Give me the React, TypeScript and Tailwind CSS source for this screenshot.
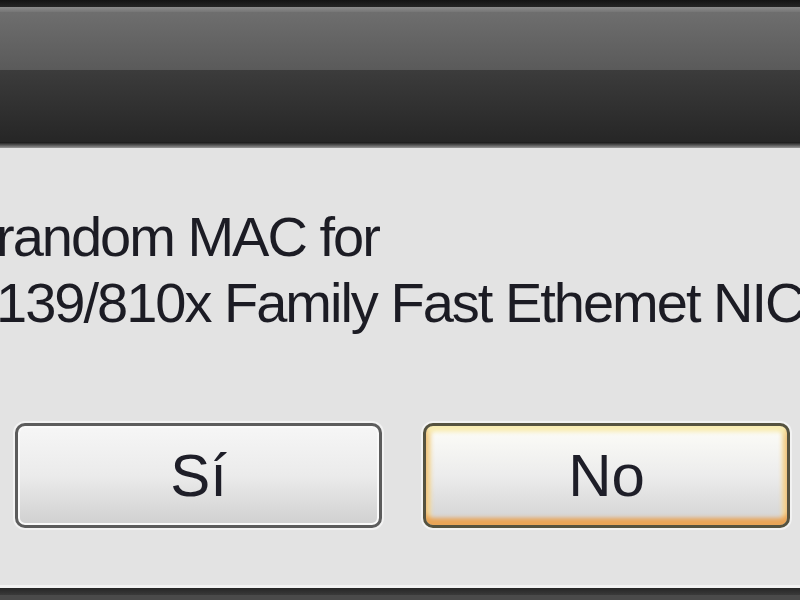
export default function App() {
  return (
    <div className="w-[800px] h-[600px] overflow-hidden flex flex-col bg-[#e3e3e3] font-['Liberation_Sans',Arial,sans-serif]">
      {/* Title bar */}
      <div className="h-[148px] flex flex-col shrink-0">
        <div className="h-[7px] bg-gradient-to-b from-[#141414] to-[#262626]" />
        <div className="h-[5px] bg-gradient-to-b from-[#8c8c8c] to-[#767676]" />
        <div className="h-[58px] bg-gradient-to-b from-[#6e6e6e] to-[#5a5a5a]" />
        <div className="h-[72px] bg-gradient-to-b from-[#3c3c3c] to-[#262626]" />
        <div className="h-[6px] bg-gradient-to-b from-[#161616] to-[#9a9a9a]" />
      </div>

      {/* Body */}
      <div className="flex-1 flex flex-col">
        <div className="pt-[56px] text-[56px] leading-[66px] tracking-[-2px] text-[#1c1c24] whitespace-nowrap">
          <div className="ml-[-4px]">random MAC for</div>
          <div className="ml-[-4px]">139/810x Family Fast Ethemet NIC</div>
        </div>

        <div className="mt-[87px] flex gap-[41px] pl-[15px]">
          <button className="w-[367px] h-[105px] rounded-[10px] border-[3px] border-[#5c5c5c] bg-gradient-to-b from-[#f6f6f6] via-[#ebebeb] to-[#d0d0d0] shadow-[inset_0_0_0_2px_#fafafa,0_0_0_2px_#f2f2f2] flex items-center justify-center text-[60px] text-[#1e1e28]">
            Sí
          </button>
          <button className="w-[367px] h-[105px] rounded-[10px] border-[3px] border-[#55523f] bg-gradient-to-b from-[#fdfdf8] via-[#ececec] to-[#d2d2d2] shadow-[inset_0_-7px_4px_#e9a457,inset_0_6px_4px_#f8ecb4,inset_5px_0_4px_#f3d79a,inset_-5px_0_4px_#f3d79a,0_0_0_2px_#f2f2f2] flex items-center justify-center text-[60px] text-[#1e1e28]">
            No
          </button>
        </div>
      </div>

      {/* Bottom edge */}
      <div className="h-[15px] flex flex-col shrink-0">
        <div className="h-[3px] bg-[#f2f2f2]" />
        <div className="h-[7px] bg-gradient-to-b from-[#262626] to-[#3a3a3a]" />
        <div className="h-[5px] bg-[#4a4a4a]" />
      </div>
    </div>
  );
}
